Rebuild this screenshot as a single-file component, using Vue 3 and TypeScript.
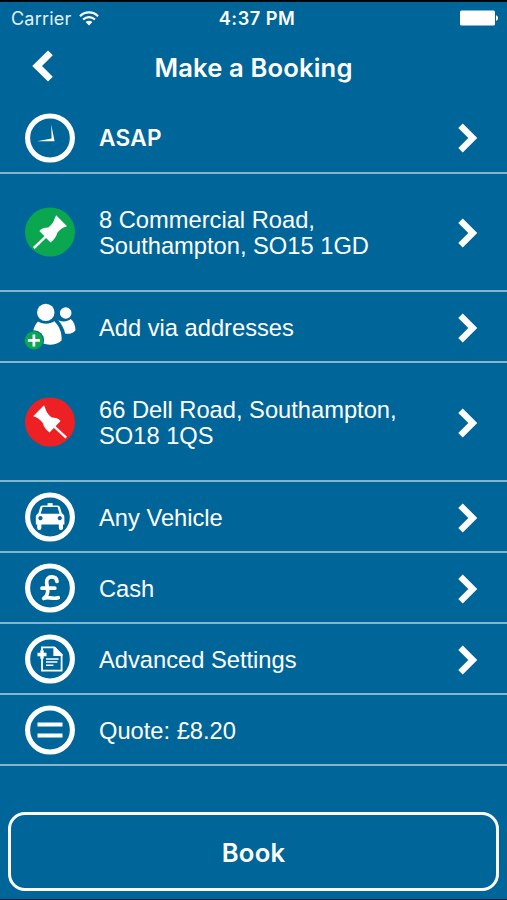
<script setup lang="ts">
type IconName = 'clock' | 'pickup' | 'people' | 'dropoff' | 'taxi' | 'pound' | 'document' | 'equals'

interface BookingRow {
  icon: IconName
  lines: string[]
  bold?: boolean
  tall?: boolean
  link: boolean
}

const rows: BookingRow[] = [
  { icon: 'clock', lines: ['ASAP'], bold: true, link: true },
  { icon: 'pickup', lines: ['8 Commercial Road,', 'Southampton, SO15 1GD'], tall: true, link: true },
  { icon: 'people', lines: ['Add via addresses'], link: true },
  { icon: 'dropoff', lines: ['66 Dell Road, Southampton,', 'SO18 1QS'], tall: true, link: true },
  { icon: 'taxi', lines: ['Any Vehicle'], link: true },
  { icon: 'pound', lines: ['Cash'], link: true },
  { icon: 'document', lines: ['Advanced Settings'], link: true },
  { icon: 'equals', lines: ['Quote: £8.20'], link: false },
]

const ringed: IconName[] = ['clock', 'taxi', 'pound', 'document', 'equals']
</script>

<template>
  <main class="screen">
    <div class="status">
      <div class="carrier">
        <span>Carrier</span>
        <svg class="wifi" width="20" height="15" viewBox="0 0 20 15">
          <path d="M1 5.2C6 .2 14 .2 19 5.2M4.1 8.5c3.4-3.3 8.4-3.3 11.8 0" fill="none" stroke="#fff" stroke-width="2.2" />
          <path d="M6.6 11.1c2-1.8 4.8-1.8 6.8 0L10 14.5z" fill="#fff" />
        </svg>
      </div>
      <span class="time">4:37 PM</span>
      <svg class="battery" width="39" height="16" viewBox="0 0 39 16">
        <rect x="0" y=".5" width="35" height="15" rx="1.5" fill="#fff" />
        <path d="M36 5.2c2.7.6 2.7 5 0 5.6z" fill="#fff" />
      </svg>
    </div>

    <header class="header">
      <svg class="back" width="22" height="32" viewBox="0 0 22 32">
        <path d="M18.4 2.9 5.1 16l13.3 13.1" fill="none" stroke="#fff" stroke-width="6.8" />
      </svg>
      <h1>Make a Booking</h1>
    </header>

    <section class="rows">
      <div v-for="row in rows" :key="row.icon" class="row" :class="{ tall: row.tall }">
        <svg class="icon" width="52" height="52" viewBox="0 0 52 52">
          <ellipse v-if="ringed.includes(row.icon)" cx="26" cy="26" rx="22.4" ry="22" fill="none" stroke="#fff" stroke-width="5.1" />

          <path v-if="row.icon === 'clock'" d="M27.2 12.5 30.6 29.2 13 29.2 27.6 26.4z" fill="#fff" />

          <g v-else-if="row.icon === 'pickup'">
            <ellipse cx="26" cy="26" rx="25" ry="24.5" fill="#0ba750" />
            <path d="M32.2 9.2 43 20.2C39 21.3 35.5 23.5 33.2 27 32.4 30.2 30.5 33.5 26.5 36.6L15.4 25.1C17.5 22.5 20.5 21.6 24.3 21.6 28 18.5 30 15.5 30.6 12.5z" fill="#fff" />
            <path d="M22 30.4 9.8 42" stroke="#fff" stroke-width="2.5" />
          </g>

          <g v-else-if="row.icon === 'people'">
            <circle cx="41.7" cy="12" r="5.8" fill="#fff" />
            <path d="M34.3 19.2c4.6 2 9.4 1.4 12.4-1.2 3 2.4 4.7 6.6 4.8 11.2-2.3 3.2-6.6 4-10.3 3.4-1.2-5.4-3.6-9.4-6.9-13.4z" fill="#fff" />
            <circle cx="21.8" cy="11.4" r="8.7" fill="#fff" />
            <path d="M14 20.4c5.4 3 11.6 3 16.4-.2 4.8 4.8 7.7 11.2 7.2 19.2-5 4.6-12.4 5.4-18.5 3.2L9.2 30.2c.6-3.8 2.3-7.2 4.8-9.8z" fill="#fff" />
            <circle cx="9.9" cy="39.4" r="10.2" fill="#006699" />
            <circle cx="9.9" cy="39.4" r="9.1" fill="#0ba750" />
            <path d="M9.9 33.4v12M3.9 39.4h12" stroke="#fff" stroke-width="2.7" />
          </g>

          <g v-else-if="row.icon === 'dropoff'">
            <ellipse cx="26" cy="26" rx="25" ry="24.5" fill="#ed2024" />
            <path d="M20 9.2 9.2 20.2C13.2 21.3 16.5 23.5 18.8 27 19.6 30.2 21.5 33.5 25.5 36.6L36.6 25.1C34.5 22.5 31.5 21.6 27.7 21.6 24 18.5 22 15.5 21.4 12.5z" fill="#fff" />
            <path d="M30 30.4 42.2 41.6" stroke="#fff" stroke-width="2.5" />
          </g>

          <g v-else-if="row.icon === 'taxi'" transform="translate(2.35 .9) scale(.91 .93)">
            <path d="M23.3 12.1h5.6v3h-5.6z" fill="#fff" />
            <path fill-rule="evenodd" d="M18 14.6h16.2c1.7 0 2.4.7 2.9 2.3l1.9 6.1c1.9 1 2.8 2.2 2.8 4.5v7.6h-1.5v3.6a2.3 2.3 0 0 1-4.6 0v-3.6H16.5v3.6a2.3 2.3 0 0 1-4.6 0v-3.6h-1.5v-7.6c0-2.3.9-3.5 2.8-4.5l1.9-6.1c.5-1.6 1.2-2.3 2.9-2.3zM17.9 16.3 15.7 23.4h20.8l-2.2-7.1zM15.5 26a2.3 2.3 0 1 0 .01 0zM36.7 26a2.3 2.3 0 1 0 .01 0z" fill="#fff" />
          </g>

          <path v-else-if="row.icon === 'pound'" d="M33 19.5c-.3-3.6-2.6-4.6-5.2-4.6-3.7 0-5.6 2.5-5.1 6.1l.9 6c.6 4.1-.8 7.2-3.9 9.5 4.4-2.4 8.2 1.1 14.5-.8M18 26.2h12.8" fill="none" stroke="#fff" stroke-width="3.7" stroke-linecap="round" stroke-linejoin="round" />

          <g v-else-if="row.icon === 'document'" fill="none" stroke="#fff">
            <path d="M18 17.5v-3.1h12.2l7.4 7.4v15.8H18V24.5" stroke-width="1.8" />
            <path d="M29.4 14h1.8l7.2 7.2v1.8h-9z" fill="#fff" stroke="none" />
            <path d="M18 17.3v8.4M13.5 21.5h9" stroke-width="3.4" />
            <path d="M22 26h12.6M22 29.1h11.4M22 32.2h7.4" stroke-width="1.5" />
          </g>

          <path v-else-if="row.icon === 'equals'" d="M13.5 20.6h25M13.5 31.4h25" stroke="#fff" stroke-width="4" />
        </svg>

        <div class="label" :class="{ bold: row.bold }">
          <div v-for="line in row.lines" :key="line">{{ line }}</div>
        </div>

        <svg v-if="row.link" class="chevron" width="22" height="32" viewBox="0 0 22 32">
          <path d="M3.5 3.7 15.8 16 3.5 28.3" fill="none" stroke="#fff" stroke-width="6.3" />
        </svg>
      </div>
    </section>

    <button class="book" type="button">Book</button>
  </main>
</template>

<style>
body {
  margin: 0;
  background: #006699;
}
</style>

<style scoped>
.screen {
  box-sizing: border-box;
  width: 507px;
  height: 900px;
  border-top: 2px solid #000509;
  border-bottom: 1px solid #001b30;
  background: #006699;
  color: #fff;
  overflow: hidden;
  font-family: Inter, "Liberation Sans", sans-serif;
}

.status {
  display: grid;
  grid-template-columns: 1fr auto 1fr;
  align-items: center;
  height: 32px;
  padding: 0 8px 0 11px;
}

.carrier {
  display: flex;
  align-items: center;
  gap: 8px;
  font-size: 18px;
  letter-spacing: 0.2px;
  color: #e3f1f8;
}

.time {
  padding-left: 4px;
  font-weight: 600;
  font-size: 18.2px;
  letter-spacing: 0.5px;
}

.battery {
  justify-self: end;
}

.header {
  display: grid;
  grid-template-columns: 60px 1fr 60px;
  align-items: center;
  height: 67px;
}

.back {
  margin: 0 0 3px 32px;
}

h1 {
  margin: 0;
  text-align: center;
  font-size: 25.6px;
  font-weight: 600;
  line-height: 30px;
  letter-spacing: 0.15px;
}

.rows {
  display: flex;
  flex-direction: column;
  padding-top: 1.5px;
}

.row {
  display: flex;
  align-items: center;
  box-sizing: border-box;
  height: 71.1px;
  padding: 1px 28px 0 24px;
  border-bottom: 2px solid #86b6ce;
}

.row.tall {
  height: 118.7px;
}

.icon {
  flex: none;
}

.label {
  flex: 1;
  padding: 1.4px 0 0 23px;
  font-family: "Liberation Sans", Arial, sans-serif;
  font-size: 23.7px;
  line-height: 26px;
  white-space: nowrap;
}

.label.bold {
  font-family: Inter, sans-serif;
  font-size: 22.6px;
  font-weight: 600;
  letter-spacing: 0.3px;
}

.chevron {
  flex: none;
  margin-top: 1.2px;
}

.book {
  display: block;
  box-sizing: border-box;
  width: 491px;
  height: 79px;
  margin: 46px 0 0 8px;
  padding: 2px 0 0;
  border: 3px solid #fff;
  border-radius: 17px;
  background: transparent;
  color: #fff;
  font: 600 25.6px Inter, sans-serif;
  letter-spacing: 0.2px;
}
</style>
